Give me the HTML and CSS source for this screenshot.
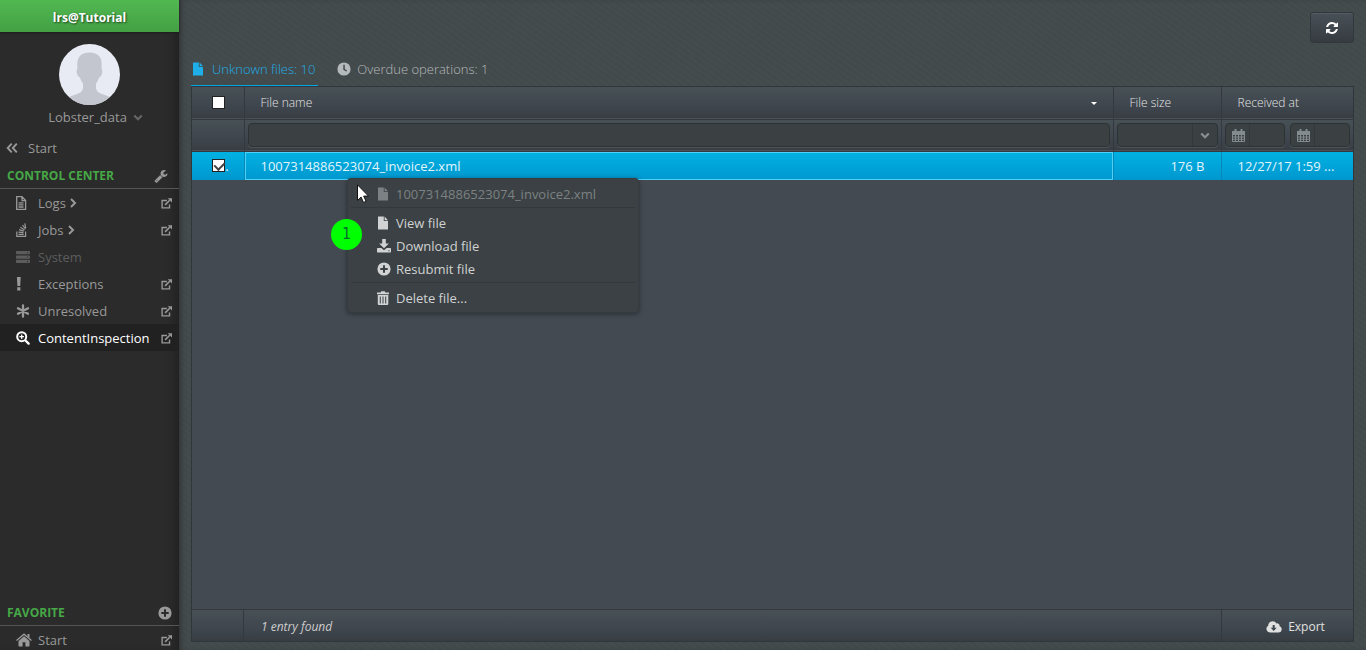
FILE: index.html
```
<!DOCTYPE html>
<html lang="en">
<head>
    <meta charset="UTF-8">
    <meta name="viewport" content="width=device-width, initial-scale=1.0">
    <title>Content Inspection</title>
    <link rel="stylesheet" href="styles.css">
</head>
<body>

    <!-- icon set -->
    <svg class="sprite" width="0" height="0" aria-hidden="true">
        <symbol id="i-file" viewBox="0 0 14 14"><path d="M1 .5h5.800V5H11v8.500H1zM7.600.5L11 4.200H7.600z"/></symbol>
        <symbol id="i-file-text" viewBox="0 0 14 14"><path fill="none" stroke="currentColor" stroke-width="1.300" d="M.7.7h5.300l3.600 3.800v8.800H.7zM6 .7v4h3.500M2.500 6.800h5M2.500 8.900h5M2.500 11h5"/></symbol>
        <symbol id="i-stack" viewBox="0 0 14 14"><path fill="none" stroke="currentColor" stroke-width="1.200" d="M.8 8.500v4.800h8.800V8.500M2.500 11.300h5.200M2.500 9.100l5 .5M3 6.700l4.800 1.400M4.400 4.200l4.200 2.700M6.500 2l3 4M8.800.4l.9 4.800"/></symbol>
        <symbol id="i-server" viewBox="0 0 14 14"><path fill-rule="evenodd" d="M.8 1h12.400q.8 0 .8.800v1.700q0 .8-.8.800H.8Q0 4.300 0 3.500V1.800Q0 1 .8 1zM.8 5.400h12.400q.8 0 .8.800v1.700q0 .8-.8.800H.8Q0 8.700 0 7.900V6.200q0-.8.800-.8zM.8 9.700h12.400q.8 0 .8.800v1.700q0 .8-.8.800H.8q-.8 0-.8-.8v-1.700q0-.8.800-.8zM11 2.200v1h1v-1zM11 6.600v1h1v-1zM11 10.900v1h1v-1z"/></symbol>
        <symbol id="i-exclaim" viewBox="0 0 14 14"><path d="M.9 0h3.800l-.5 9H1.400zM1.200 10.300h3.200v3.200H1.200z"/></symbol>
        <symbol id="i-asterisk" viewBox="0 0 14 14"><path fill="none" stroke="currentColor" stroke-width="2.300" stroke-linecap="round" d="M7 1.300v11.400M2 4.200l10 5.600M2 9.800l10-5.600"/></symbol>
        <symbol id="i-search-plus" viewBox="0 0 14 14"><circle cx="5.700" cy="5.700" r="4.500" fill="none" stroke="currentColor" stroke-width="2"/><path fill="none" stroke="currentColor" stroke-width="1.300" d="M5.700 3.400V8M3.400 5.700H8"/><path fill="none" stroke="currentColor" stroke-width="2.400" stroke-linecap="round" d="M9.500 9.500l3.100 3.100"/></symbol>
        <symbol id="i-home" viewBox="0 0 16 14"><path d="M8 3.200l5.500 4.700v4.900q0 .7-.7.700H9.400V9.300H6.600v4.200H3.200q-.7 0-.7-.7V7.900z"/><path fill="none" stroke="currentColor" stroke-width="1.300" d="M.5 7.400L8 1.200l7.500 6.200"/><path d="M11.500 1h2v4l-2-1.700z"/></symbol>
        <symbol id="i-external" viewBox="0 0 12 12"><path fill="none" stroke="currentColor" stroke-width="1.500" d="M6.500 2.700H1.200v8.100h8.100V7"/><path fill="none" stroke="currentColor" stroke-width="1.700" d="M4.500 7.500l5-5"/><path d="M7.300.3H12V5z"/></symbol>
        <symbol id="i-wrench" viewBox="0 0 1792 1792"><path d="M448 1472q0-26-19-45t-45-19-45 19-19 45 19 45 45 19 45-19 19-45zm644-420l-682 682q-37 37-90 37-52 0-91-37l-106-108q-38-36-38-90 0-53 38-91l681-681q39 98 114.500 173.500t173.500 114.500zm634-435q0 39-23 106-47 134-164.500 217.500t-258.500 83.500q-185 0-316.500-131.500t-131.500-316.500 131.500-316.500 316.500-131.500q58 0 121.500 16.500t107.500 46.500q16 11 16 28t-16 28l-293 169v224l193 107q5-3 79-48.500t135.500-81 70.500-35.500q15 0 23.500 10t8.500 25z"/></symbol>
        <symbol id="i-plus-circle" viewBox="0 0 14 14"><path fill-rule="evenodd" d="M7 .4a6.600 6.600 0 1 1 0 13.200A6.600 6.600 0 0 1 7 .4zM6 3.300V6H3.300v2H6v2.700h2V8h2.700V6H8V3.300z"/></symbol>
        <symbol id="i-clock" viewBox="0 0 14 14"><path fill-rule="evenodd" d="M7 .4a6.600 6.600 0 1 1 0 13.200A6.600 6.600 0 0 1 7 .4zM6.300 2.800v4.900l3 1.900.8-1.200-2.300-1.500V2.800z"/></symbol>
        <symbol id="i-double-left" viewBox="0 0 12 12"><path fill="none" stroke="currentColor" stroke-width="1.900" d="M5.700 1.700L1.700 6l4 4.300M10.800 1.700L6.800 6l4 4.300"/></symbol>
        <symbol id="i-right" viewBox="0 0 8 10"><path fill="none" stroke="currentColor" stroke-width="2" d="M2 1l4 4-4 4"/></symbol>
        <symbol id="i-down" viewBox="0 0 12 8"><path fill="none" stroke="currentColor" stroke-width="2.600" d="M1.500 1.500L6 6l4.500-4.500"/></symbol>
        <symbol id="i-refresh" viewBox="0 0 1792 1792"><path d="M1639 1056q0 5-1 7-64 268-268 434.500t-478 166.500q-146 0-282.500-55t-243.500-157l-129 129q-19 19-45 19t-45-19-19-45v-448q0-26 19-45t45-19h448q26 0 45 19t19 45-19 45l-137 137q71 66 161 102t187 36q134 0 250-65t186-179q11-17 53-117 8-23 30-23h192q13 0 22.500 9.500t9.500 22.500zm25-800v448q0 26-19 45t-45 19h-448q-26 0-45-19t-19-45 19-45l138-138q-148-137-349-137-134 0-250 65t-186 179q-11 17-53 117-8 23-30 23h-199q-13 0-22.500-9.500t-9.500-22.500v-7q65-268 270-434.500t480-166.500q146 0 284 55.500t245 156.500l130-129q19-19 45-19t45 19 19 45z"/></symbol>
        <symbol id="i-calendar" viewBox="0 0 13 13"><path fill="none" stroke="currentColor" d="M.5 2.500h12v10H.5zM.5 5.500h12M.5 8h12M.5 10.200h12M3.500 5v7M6.500 5v7M9.500 5v7"/><path d="M0 2h13v3H0zM2.500 0h2v3h-2zM8.500 0h2v3h-2z"/></symbol>
        <symbol id="i-download" viewBox="0 0 14 14"><path fill-rule="evenodd" d="M5.200 0h3.600v4.500h3L7 9.300 2.200 4.500h3zM.7 9h3.600L7 11.300 9.700 9h3.600q.7 0 .7.700v3q0 .7-.7.700H.7q-.7 0-.7-.7v-3Q0 9 .7 9zM11.300 11.300v1h1.200v-1z"/></symbol>
        <symbol id="i-trash" viewBox="0 0 14 14"><path fill-rule="evenodd" d="M4.200.2h3.600l.5 1.300H12v1.700H0V1.500h3.700zM.8 4h10.500v9q0 1-1 1h-8.500q-1 0-1-1zM2.800 5.500v7h1v-7zM5.500 5.500v7h1v-7zM8.200 5.500v7h1v-7z"/></symbol>
        <symbol id="i-cloud" viewBox="0 0 16 12"><path fill-rule="evenodd" d="M4 11.500A3.600 3.600 0 0 1 2.200 4.800 4.500 4.500 0 0 1 10.500 2.400 2.600 2.600 0 0 1 13.600 5.300 3.200 3.200 0 0 1 12.800 11.500zM6.700 4v2.700h-2L7.700 10l3-3.300h-2V4z"/></symbol>
    </svg>

    <aside class="sidebar">
        <header class="brand">lrs@Tutorial</header>

        <div class="profile">
            <svg class="avatar" viewBox="0 0 61 61" aria-hidden="true">
                <clipPath id="round"><circle cx="30.500" cy="30.500" r="30.500"/></clipPath>
                <g clip-path="url(#round)">
                    <rect width="61" height="61" fill="#e8ebf3"/>
                    <path fill="#c3c6ce" d="M18.500 24C17 13 22 8.500 30.500 8.500S44 13 42.500 24q2 4-.5 8-2 1-2.500 3-1 3-2.500 4.500v5q1 4 6 5.500 6 2 10 4v7H8v-7q4-2 10-4 5-1.500 6-5.500v-5q-1.500-1.500-2.500-4.500-.5-2-2.500-3-2.500-4-.5-8z"/>
                </g>
            </svg>
            <button type="button" class="user">Lobster_data <svg class="icon-down"><use href="#i-down"/></svg></button>
        </div>

        <a class="back" href="#start"><svg class="icon-small"><use href="#i-double-left"/></svg>Start</a>

        <section>
            <h2>CONTROL CENTER <button type="button" aria-label="Settings"><svg class="icon"><use href="#i-wrench"/></svg></button></h2>
            <nav>
                <a href="#logs"><svg class="icon"><use href="#i-file-text"/></svg><span>Logs <svg class="icon-right"><use href="#i-right"/></svg></span><svg class="icon-small"><use href="#i-external"/></svg></a>
                <a href="#jobs"><svg class="icon"><use href="#i-stack"/></svg><span>Jobs <svg class="icon-right"><use href="#i-right"/></svg></span><svg class="icon-small"><use href="#i-external"/></svg></a>
                <a href="#system" class="disabled"><svg class="icon"><use href="#i-server"/></svg><span>System</span></a>
                <a href="#exceptions"><svg class="icon"><use href="#i-exclaim"/></svg><span>Exceptions</span><svg class="icon-small"><use href="#i-external"/></svg></a>
                <a href="#unresolved"><svg class="icon"><use href="#i-asterisk"/></svg><span>Unresolved</span><svg class="icon-small"><use href="#i-external"/></svg></a>
                <a href="#inspection" class="active"><svg class="icon"><use href="#i-search-plus"/></svg><span>ContentInspection</span><svg class="icon-small"><use href="#i-external"/></svg></a>
            </nav>
        </section>

        <section class="favorite">
            <h2>FAVORITE <button type="button" aria-label="Add favorite"><svg class="icon"><use href="#i-plus-circle"/></svg></button></h2>
            <nav>
                <a href="#start"><svg class="icon icon-home"><use href="#i-home"/></svg><span>Start</span><svg class="icon-small"><use href="#i-external"/></svg></a>
            </nav>
        </section>
    </aside>

    <main>
        <div class="toolbar">
            <button type="button" class="refresh" aria-label="Refresh"><svg class="icon"><use href="#i-refresh"/></svg></button>
        </div>

        <div class="tabs">
            <a href="#unknown" class="active"><svg class="icon"><use href="#i-file"/></svg>Unknown files: 10</a>
            <a href="#overdue"><svg class="icon"><use href="#i-clock"/></svg>Overdue operations: 1</a>
        </div>

        <div class="grid">
            <table>
                <colgroup>
                    <col class="col-check">
                    <col>
                    <col class="col-size">
                    <col class="col-date">
                </colgroup>
                <thead>
                    <tr class="titles">
                        <th class="check"><div><input type="checkbox" aria-label="Select all"></div></th>
                        <th><div class="sortable">File name <i class="sort"></i></div></th>
                        <th>File size</th>
                        <th>Received at</th>
                    </tr>
                    <tr class="filters">
                        <td></td>
                        <td><input type="text" class="field" aria-label="Filter file name"></td>
                        <td>
                            <div class="field pick">
                                <select aria-label="Filter file size"><option></option></select>
                                <svg class="icon-down"><use href="#i-down"/></svg>
                            </div>
                        </td>
                        <td>
                            <div class="dates">
                                <div class="field date"><button type="button" aria-label="Pick start date"><svg class="icon-cal"><use href="#i-calendar"/></svg></button><input type="text" aria-label="Received from"></div>
                                <div class="field date"><button type="button" aria-label="Pick end date"><svg class="icon-cal"><use href="#i-calendar"/></svg></button><input type="text" aria-label="Received to"></div>
                            </div>
                        </td>
                    </tr>
                </thead>
                <tbody>
                    <tr>
                        <td class="check"><div><input type="checkbox" aria-label="Select file" checked><span>.</span></div></td>
                        <td class="name">1007314886523074_invoice2.xml</td>
                        <td class="size">176 B</td>
                        <td>12/27/17 1:59 ...</td>
                    </tr>
                </tbody>
            </table>

            <footer>
                <div class="foot-check"></div>
                <div class="count">1 entry found</div>
                <button type="button" class="export"><svg class="icon-cloud"><use href="#i-cloud"/></svg>Export</button>
            </footer>

            <div class="menu" role="menu">
                <button type="button" disabled><svg class="icon"><use href="#i-file"/></svg>1007314886523074_invoice2.xml</button>
                <hr>
                <button type="button"><svg class="icon"><use href="#i-file"/></svg>View file</button>
                <button type="button"><svg class="icon"><use href="#i-download"/></svg>Download file</button>
                <button type="button"><svg class="icon"><use href="#i-plus-circle"/></svg>Resubmit file</button>
                <hr>
                <button type="button"><svg class="icon"><use href="#i-trash"/></svg>Delete file...</button>
            </div>
            <svg class="cursor" viewBox="0 0 12 19" aria-hidden="true"><path fill="#fff" stroke="#111" d="M.5.800v15.700l3.600-3.400 2.400 5.400 2.600-1.100-2.400-5.300h4.800z"/></svg>
            <span class="step">1</span>
        </div>
    </main>

</body>
</html>
```
FILE: styles.css
```
* {
    box-sizing: border-box;
}

body {
    margin: 0;
    height: 100vh;
    display: flex;
    overflow: hidden;
    font-family: "Open Sans", "Noto Sans", sans-serif;
    font-size: 13px;
    line-height: 18px;
    color: #ccc;
    background-color: #434a4c;
    background-image: repeating-linear-gradient(35deg, rgba(255, 255, 255, 0.01) 0 2px, transparent 2px 5px),
        repeating-linear-gradient(135deg, rgba(0, 0, 0, 0.02) 0 1px, transparent 1px 7px);
}

a {
    color: inherit;
    text-decoration: none;
}

button,
input,
select {
    font: inherit;
    color: inherit;
    margin: 0;
    padding: 0;
    border: 0;
    background: none;
}

svg {
    fill: currentColor;
    flex: none;
}

.sprite {
    position: absolute;
}

.icon {
    width: 14px;
    height: 14px;
}

.icon-home {
    width: 16px;
}

.icon-small {
    width: 12px;
    height: 12px;
}

.icon-down {
    width: 10px;
    height: 7px;
}

.icon-right {
    width: 8px;
    height: 10px;
}

.icon-cal {
    width: 13px;
    height: 13px;
}

.icon-cloud {
    width: 16px;
    height: 12px;
}

/* sidebar */
.sidebar {
    width: 179px;
    flex: none;
    display: flex;
    flex-direction: column;
    color: #999;
    background: #2b2b2b;
    box-shadow: inset -8px 0 8px -4px #222;
}

.brand {
    height: 32px;
    padding-top: 9px;
    text-align: center;
    font-size: 12px;
    font-weight: 700;
    color: #fff;
    text-shadow: 1px 1px 2px rgba(0, 0, 0, 0.6);
    background: linear-gradient(#51b851, #43a043);
    box-shadow: 0 1px 2px #1c1c1c;
}

.profile {
    display: flex;
    flex-direction: column;
    align-items: center;
    gap: 3px;
    padding-top: 12px;
}

.avatar {
    width: 61px;
    height: 61px;
}

.user {
    display: flex;
    align-items: center;
    gap: 6px;
    padding-left: 12px;
}

.user svg {
    color: #666;
}

.back {
    display: flex;
    align-items: center;
    gap: 10px;
    margin-top: 13px;
    padding-left: 6px;
}

.sidebar h2 {
    display: flex;
    align-items: center;
    justify-content: space-between;
    height: 27px;
    margin: 5px 0 0;
    padding: 2px 11px 0 7px;
    font-size: 12px;
    font-weight: 700;
    color: #46a846;
    border-bottom: 1px solid #555;
}

.sidebar h2 button {
    display: flex;
    color: #999;
}

.sidebar nav a {
    display: flex;
    align-items: center;
    height: 27px;
    padding: 0 7px 0 16px;
}

nav span {
    flex: 1;
    margin-left: 8px;
}

.icon-home + span {
    margin-left: 6px;
}

nav .disabled {
    color: #5c5c5c;
}

nav .active {
    color: #fff;
    background: #212121;
}

nav .icon-small {
    width: 11px;
    height: 11px;
    margin-top: 2px;
    color: #999;
}

.favorite {
    margin-top: auto;
    height: 51px;
}

.favorite h2 {
    margin-top: 0;
    padding-right: 7px;
}

/* content */
main {
    flex: 1;
    min-width: 0;
    display: flex;
    flex-direction: column;
    padding: 12px 12px 8px;
    box-shadow: inset 4px 0 6px -4px #222;
}

.toolbar {
    display: flex;
    justify-content: flex-end;
}

.refresh {
    display: flex;
    align-items: center;
    justify-content: center;
    width: 44px;
    height: 31px;
    color: #fff;
    border: 1px solid #31373a;
    border-radius: 3px;
    background: linear-gradient(#485057, #363b41);
    box-shadow: inset 0 1px #555d63;
}

.tabs {
    display: flex;
    height: 43px;
    gap: 19px;
    padding-top: 9px;
    font-weight: 300;
}

.tabs a {
    display: flex;
    align-items: center;
    gap: 6px;
    color: #b4b9bb;
    height: 34px;
    padding-right: 3px;
}

.tabs .active {
    padding-left: 1px;
    color: #1eaee8;
    border-bottom: 1px solid #00a8df;
}

.grid {
    position: relative;
    flex: 1;
    display: flex;
    flex-direction: column;
    background: #434a52;
    border: 1px solid #30363a;
}

table {
    width: 100%;
    table-layout: fixed;
    border-collapse: collapse;
}

.col-check {
    width: 52px;
}

.col-size {
    width: 108px;
}

.col-date {
    width: 132px;
}

th,
td {
    padding: 0 16px;
    text-align: left;
    font-weight: normal;
    white-space: nowrap;
    overflow: hidden;
    border-right: 1px solid #33393e;
}

th:last-child,
td:last-child {
    border-right: 0;
}

thead tr {
    height: 32px;
    background: linear-gradient(#485156, #3f464e 60%, #383d43);
    border-bottom: 1px solid #33393e;
}

.titles th {
    font-size: 12px;
    font-weight: 300;
    color: #e4e4e4;
}

.titles .check,
tbody .check {
    padding: 0 0 0 2px;
}

.check div {
    display: flex;
    align-items: center;
    justify-content: center;
}

.check span {
    width: 0;
}

.sortable {
    display: flex;
    align-items: center;
    justify-content: space-between;
}

.sort {
    border: 3px solid transparent;
    border-top-color: #fff;
    border-bottom: 0;
    margin-top: 2px;
}

.filters td {
    padding: 0 3px;
}

.field {
    display: flex;
    align-items: center;
    width: 100%;
    height: 24px;
    border: 1px solid #2d3234;
    border-radius: 4px;
    background: #3b4143;
    box-shadow: 0 1px #4c545a;
}

.pick {
    position: relative;
}

.pick select {
    width: 100%;
    height: 100%;
    appearance: none;
}

.pick svg {
    position: absolute;
    right: 7px;
    color: #899093;
    pointer-events: none;
}

.pick::after {
    content: "";
    position: absolute;
    right: 24px;
    height: 100%;
    border-left: 1px solid #333839;
}

.dates {
    display: flex;
    gap: 5px;
}

.date {
    flex: 1;
    min-width: 0;
}

.date button {
    display: flex;
    flex: none;
    align-items: center;
    height: 100%;
    padding: 0 4px 0 6px;
    color: #848b8e;
    border-right: 1px solid #333839;
}

.date input {
    flex: 1;
    width: 0;
}

tbody tr {
    height: 29px;
    color: #e3f5fc;
    background: linear-gradient(#00b2e2, #0097cf);
}

tbody td {
    border-color: #0588b9;
}

tbody .name {
    box-shadow: inset 0 0 0 1px #4fd0f5;
}

tbody .size {
    text-align: right;
}

input[type="checkbox"] {
    position: relative;
    flex: none;
    appearance: none;
    width: 13px;
    height: 13px;
    background: #fff;
    border: 1px solid #222;
}

input[type="checkbox"]:checked::after {
    content: "";
    position: absolute;
    left: 3px;
    top: 0;
    width: 5px;
    height: 8px;
    border: solid #444;
    border-width: 0 2px 2px 0;
    transform: rotate(45deg);
}

.grid footer {
    display: flex;
    align-items: stretch;
    height: 32px;
    margin-top: auto;
    border-top: 1px solid #33393e;
    background: linear-gradient(#485156, #3f464e 60%, #383d43);
}

.foot-check {
    width: 52px;
    border-right: 1px solid #33393e;
}

.count {
    flex: 1;
    padding: 8px 17px 0;
    font-size: 12px;
    font-style: italic;
}

.export {
    display: flex;
    align-items: center;
    justify-content: center;
    gap: 6px;
    width: 132px;
    padding: 2px 0 0 16px;
    font-size: 12px;
    color: #e0e0e0;
    border-left: 1px solid #33393e;
}

/* context menu */
.menu {
    position: absolute;
    left: 155px;
    top: 91px;
    width: 292px;
    padding: 3px;
    background: #3b4144;
    border: 1px solid #353b3e;
    border-radius: 4px;
    box-shadow: 0 1px 5px rgba(0, 0, 0, 0.4);
}

.menu button {
    display: flex;
    align-items: center;
    gap: 5px;
    width: 100%;
    height: 23px;
    padding-left: 26px;
    color: #d0d2d3;
}

.menu button:disabled {
    color: #7c8183;
}

.menu hr {
    height: 1px;
    margin: 2px 0 3px;
    border: 0;
    background: #33393b;
}

.cursor {
    position: absolute;
    left: 165px;
    top: 97px;
    width: 12px;
    height: 19px;
}

.step {
    position: absolute;
    left: 139px;
    top: 132px;
    width: 31px;
    height: 31px;
    border-radius: 50%;
    text-align: center;
    font-family: "DejaVu Sans Condensed", "DejaVu Sans", sans-serif;
    font-size: 15px;
    line-height: 31px;
    color: #063;
    background: #0f0;
}
```
